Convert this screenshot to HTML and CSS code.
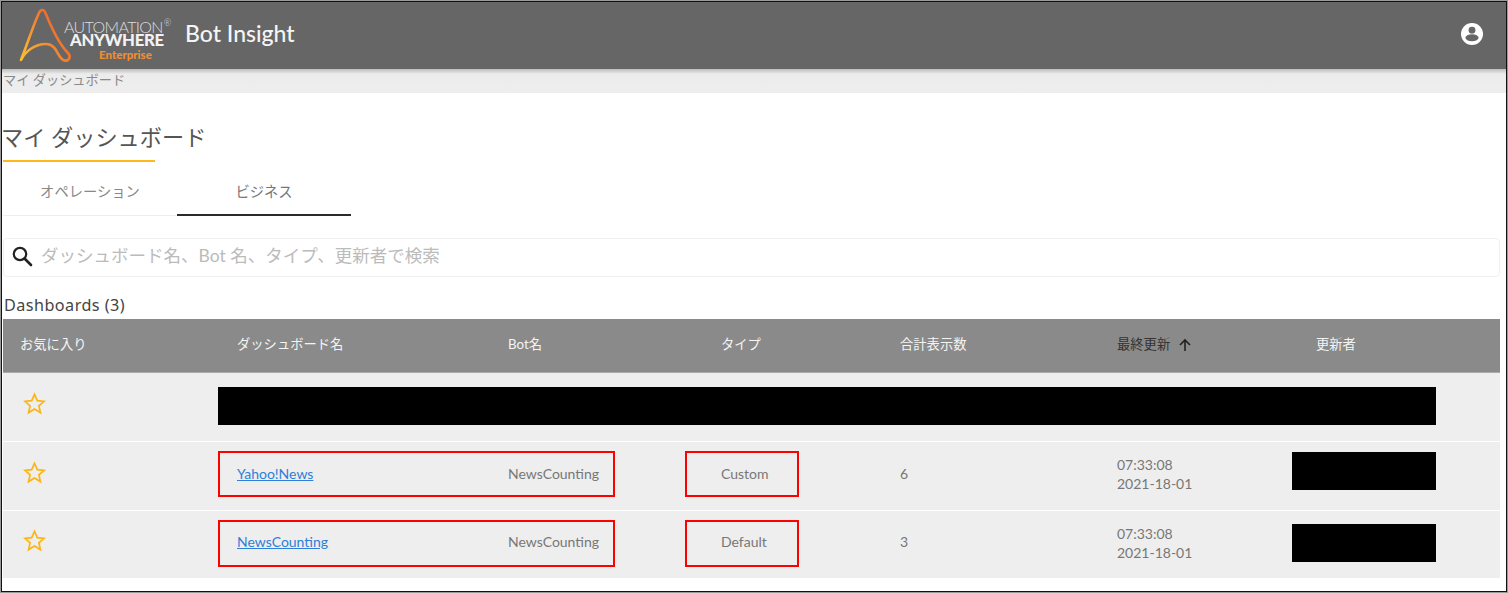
FILE: index.html
```html
<!DOCTYPE html>
<html lang="ja">
<head>
<meta charset="utf-8">
<title>Bot Insight</title>
<link rel="stylesheet" href="styles.css">
</head>
<body>
<div class="frame">
  <header class="topbar">
    <div class="logo">
      <svg class="logo-mark" width="56" height="56" viewBox="0 0 56 56" aria-hidden="true">
        <defs>
          <linearGradient id="lg" x1="0" y1="1" x2="1" y2="0.3">
            <stop offset="0" stop-color="#fbc02d"/>
            <stop offset="0.45" stop-color="#f59331"/>
            <stop offset="1" stop-color="#e8562e"/>
          </linearGradient>
        </defs>
        <path d="M2 53C9 35 16 14 20 6C21.500 2 25 2 26.500 6C33 22 41 38 49 46C52.500 49.500 50 54.500 45.500 53.500C38 52 39 37 27 37C15 37 6 45 2 53Z" fill="none" stroke="url(#lg)" stroke-width="2.600" stroke-linejoin="round"/>
      </svg>
      <div class="logo-text">
        <div class="logo-line1">AUTOMATION<sup class="reg">®</sup></div>
        <div class="logo-line2">ANYWHERE</div>
        <div class="logo-line3">Enterprise</div>
      </div>
    </div>
    <div class="product">Bot Insight</div>
    <svg class="user" width="24" height="24" viewBox="0 0 24 24" aria-hidden="true">
      <circle cx="12" cy="12" r="11" fill="#fff"/>
      <circle cx="12" cy="8.200" r="3.400" fill="#666"/>
      <ellipse cx="12" cy="15.800" rx="6.600" ry="3.500" fill="#666"/>
    </svg>
  </header>
  <div class="crumb">マイ ダッシュボード</div>
  <main class="content">
    <h1 class="title"><span class="title-text">マイ ダッシュボード</span></h1>
    <div class="tabs">
      <div class="tab">オペレーション</div>
      <div class="tab tab-active">ビジネス</div>
    </div>
    <div class="search">
      <svg width="22" height="22" viewBox="0 0 22 22" aria-hidden="true">
        <circle cx="9" cy="9" r="6.200" fill="none" stroke="#222" stroke-width="2.200"/>
        <path d="M13.500 13.500L20 20" stroke="#222" stroke-width="2.600" stroke-linecap="round"/>
      </svg>
      <span class="search-text">ダッシュボード名、Bot 名、タイプ、更新者で検索</span>
    </div>
    <div class="count">Dashboards (3)</div>
    <div class="table">
      <div class="row head">
        <div class="cell">お気に入り</div>
        <div class="cell">ダッシュボード名</div>
        <div class="cell">Bot名</div>
        <div class="cell">タイプ</div>
        <div class="cell">合計表示数</div>
        <div class="cell sorted">最終更新
          <svg width="14" height="14" viewBox="0 0 14 14" aria-hidden="true"><path d="M7 13V2M2 7l5-5 5 5" fill="none" stroke="#222" stroke-width="1.600"/></svg>
        </div>
        <div class="cell">更新者</div>
      </div>
      <div class="row body r1">
        <div class="cell"><svg class="star" viewBox="0 0 24 24" aria-hidden="true"><path d="M12 2.500l2.900 6.600 7.100.700-5.400 4.700 1.600 7-6.200-3.700-6.200 3.700 1.600-7L2 9.800l7.100-.7z"/></svg></div>
        <div class="cell"></div><div class="cell"></div><div class="cell"></div><div class="cell"></div><div class="cell"></div><div class="cell"></div>
      </div>
      <div class="row body r2">
        <div class="cell"><svg class="star" viewBox="0 0 24 24" aria-hidden="true"><path d="M12 2.500l2.900 6.600 7.100.700-5.400 4.700 1.600 7-6.200-3.700-6.200 3.700 1.600-7L2 9.800l7.100-.7z"/></svg></div>
        <div class="cell"><a class="link" href="#">Yahoo!News</a></div>
        <div class="cell">NewsCounting</div>
        <div class="cell">Custom</div>
        <div class="cell">6</div>
        <div class="cell stamp">07:33:08<br>2021-18-01</div>
        <div class="cell"></div>
      </div>
      <div class="row body r3">
        <div class="cell"><svg class="star" viewBox="0 0 24 24" aria-hidden="true"><path d="M12 2.500l2.900 6.600 7.100.700-5.400 4.700 1.600 7-6.200-3.700-6.200 3.700 1.600-7L2 9.800l7.100-.7z"/></svg></div>
        <div class="cell"><a class="link" href="#">NewsCounting</a></div>
        <div class="cell">NewsCounting</div>
        <div class="cell">Default</div>
        <div class="cell">3</div>
        <div class="cell stamp">07:33:08<br>2021-18-01</div>
        <div class="cell"></div>
      </div>
      <div class="mask mask-wide"></div>
      <div class="mask mask-r2"></div>
      <div class="mask mask-r3"></div>
      <div class="mark mark-a"></div>
      <div class="mark mark-b"></div>
      <div class="mark mark-c"></div>
      <div class="mark mark-d"></div>
    </div>
  </main>
</div>
</body>
</html>
```
FILE: styles.css
```css
* { box-sizing: border-box; }
html, body { margin: 0; padding: 0; background: #fff; }
body {
  font-family: "Lato", "Noto Sans CJK JP", sans-serif;
  color: #666;
  overflow: hidden;
}
.frame {
  width: 1508px;
  height: 593px;
  border: 2px solid #111;
  overflow: hidden;
  background: #fff;
  outline: 1px solid #999;
  outline-offset: -1px;
}
.topbar {
  height: 67px;
  background: #666;
  display: flex;
  align-items: center;
  padding-right: 24px;
  padding-bottom: 4px;
  color: #fff;
}
.logo { display: flex; margin-left: 17px; width: 166px; height: 56px; }
.logo-mark { flex: none; margin-top: 1px; }
.logo-text { margin-left: -11px; padding-top: 13px; width: 110px; }
.logo-line1 { font-size: 16px; font-weight: 300; letter-spacing: -0.650px; line-height: 15px; color: #ddd; white-space: nowrap; }
.reg { font-size: 9px; vertical-align: 7px; line-height: 0; margin-left: 1px; }
.logo-line2 { font-size: 16.700px; font-weight: 900; letter-spacing: -0.300px; line-height: 13px; margin-left: 6px; color: #f2f2f2; white-space: nowrap; }
.logo-line3 { font-size: 11.500px; font-weight: 900; color: #ef8e33; line-height: 12px; margin-left: 35px; margin-top: 2px; white-space: nowrap; }
.product { font-size: 23px; font-weight: 500; color: #f5f5f5; flex: 1; padding-bottom: 2px; }
.user { flex: none; margin-right: -2px; }
.crumb {
  height: 24px;
  background: linear-gradient(#bdbdbd 0, #ececec 5px, #eeeeee 100%);
  font-size: 13.200px;
  line-height: 23px;
  padding-left: 1px;
  color: #8a8a8a;
  white-space: nowrap;
}
.content { padding: 0 4px 0 1px; }
.title {
  margin: 0;
  height: 69px;
  padding-top: 28px;
  font-weight: 400;
  font-size: 22.200px;
  line-height: 34px;
  color: #555;
  white-space: nowrap;
}
.title-text { display: block; width: 152px; height: 41px; border-bottom: 2px solid #fcb81c; text-indent: -2px; }
.tabs { display: flex; height: 54px; }
.tab {
  width: 174px;
  height: 54px;
  border-bottom: 1px solid #eee;
  text-align: center;
  font-size: 14.300px;
  line-height: 60px;
  color: #888;
}
.tab-active { border-bottom: 2px solid #2b2b2b; color: #777; }
.search {
  margin-top: 22px;
  height: 39px;
  width: 1497px;
  border: 1px solid #f0f0f0;
  border-radius: 4px;
  display: flex;
  align-items: center;
  padding: 0 0 4px 7px;
  gap: 8px;
}
.search-text { font-size: 17.500px; color: #bbb; white-space: nowrap; margin-top: -2px; }
.count { margin-top: 18px; height: 24px; font-family: "Noto Sans", "Noto Sans CJK JP", sans-serif; font-size: 16.200px; letter-spacing: 0.450px; line-height: 20px; color: #444; padding-left: 1px; }
.table { position: relative; width: 1497px; }
.row {
  display: grid;
  grid-template-columns: 217px 271px 213px 179px 217px 199px 201px;
  align-items: center;
}
.head { height: 54px; background: #8a8a8a; border-bottom: 1px solid #aaa; color: #f4f4f4; font-size: 13.300px; font-weight: 400; padding-bottom: 4px; }
.body { background: #eee; font-size: 14px; color: #777; border-bottom: 1px solid #fff; padding-bottom: 6px; }
.r1 { height: 69px; }
.r2 { height: 69px; }
.r3 { height: 67px; border-bottom: 0; }
.cell { padding-left: 17px; white-space: nowrap; }
.sorted { color: #333; display: flex; align-items: center; gap: 8px; }
.sorted svg { margin-top: 3px; }
.stamp { line-height: 19px; padding-top: 2px; }
.link { color: #2f7ed8; text-decoration: underline; }
.star { display: block; width: 23px; height: 23px; margin-left: 3px; margin-top: -2px; fill: none; stroke: #fdb515; stroke-width: 1.800; }
.mask { position: absolute; background: #000; }
.mask-wide { left: 215px; width: 1218px; top: 68px; height: 38px; }
.mask-r2 { left: 1289px; width: 144px; top: 133px; height: 38px; }
.mask-r3 { left: 1289px; width: 144px; top: 205px; height: 38px; }
.mark { position: absolute; border: 2px solid #f00; height: 46px; }
.mark-a { left: 215px; width: 397px; top: 132px; }
.mark-b { left: 682px; width: 114px; top: 132px; }
.mark-c { left: 215px; width: 397px; top: 201px; height: 47px; }
.mark-d { left: 682px; width: 114px; top: 201px; height: 47px; }
```
